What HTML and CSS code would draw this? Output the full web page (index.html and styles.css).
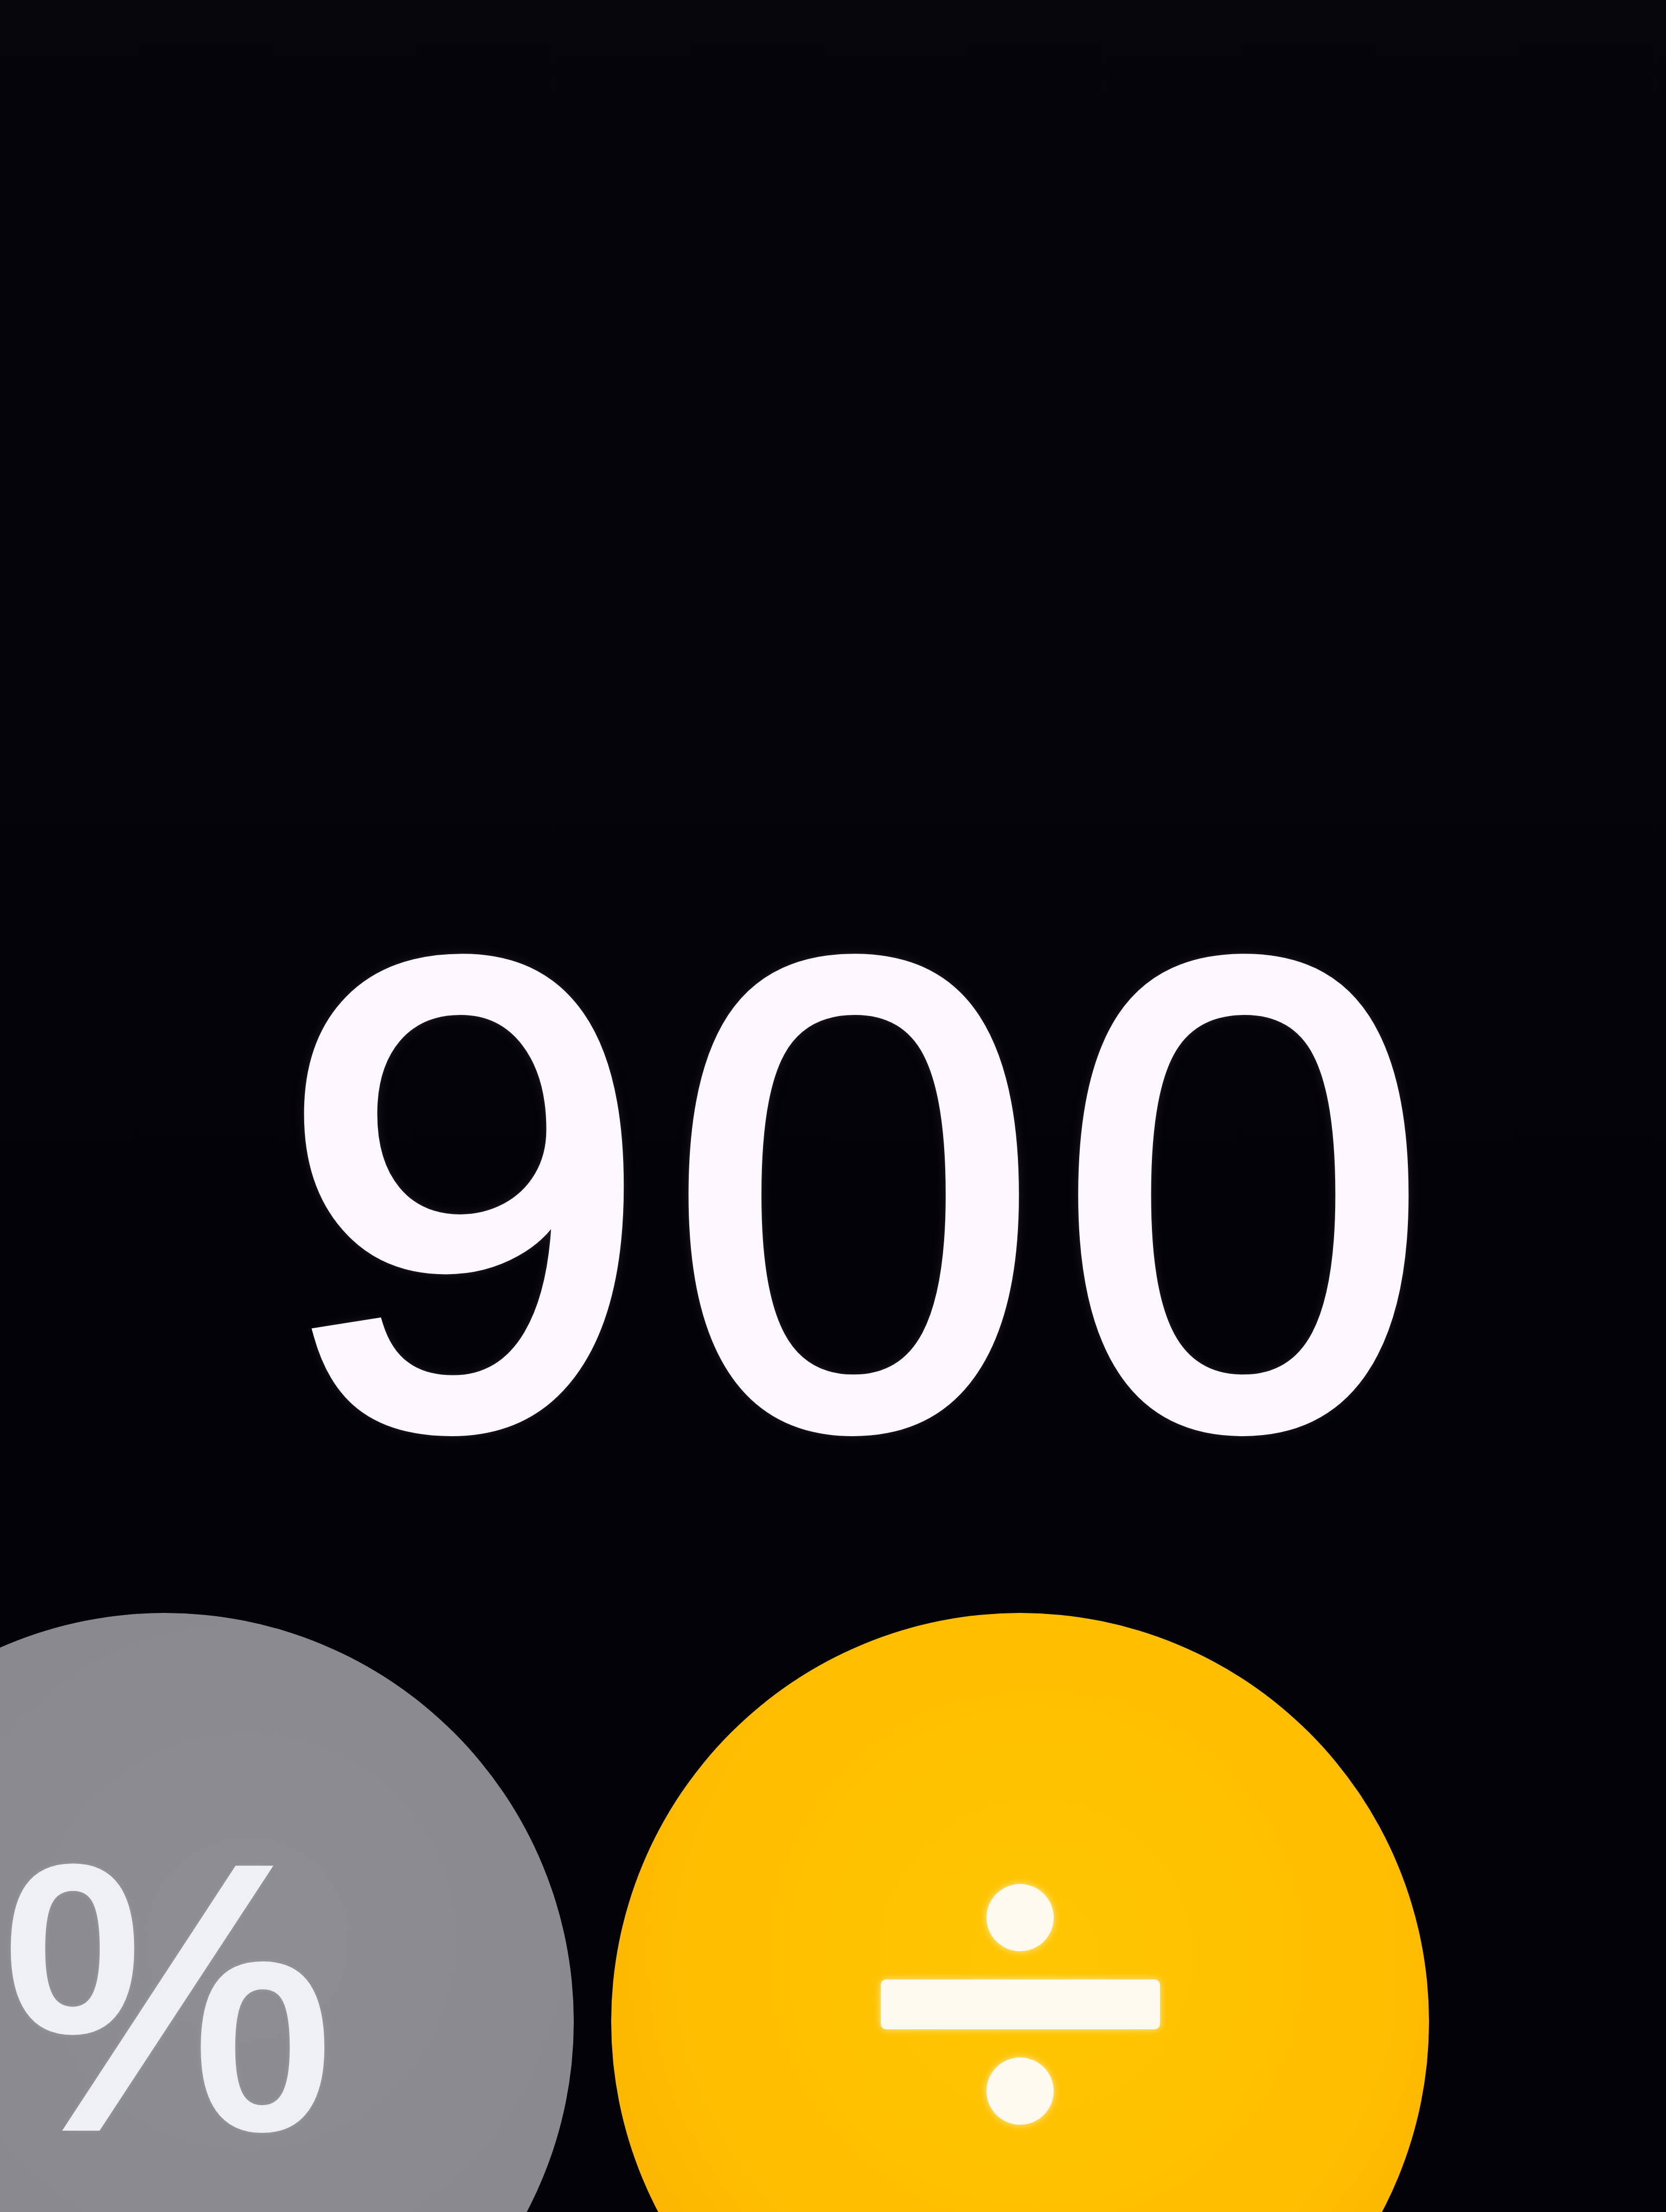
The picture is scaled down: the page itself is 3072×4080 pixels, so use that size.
FILE: index.html
```html
<!DOCTYPE html>
<html lang="en">
<head>
<meta charset="utf-8">
<title>Calculator</title>
<link rel="stylesheet" href="styles.css">
</head>
<body>
<main class="calc">
  <div class="display">900</div>
  <div class="keys">
    <button class="key key-gray"><span class="key-label">%</span></button>
    <button class="key key-orange" aria-label="divide">
      <span class="divide">
        <span class="dot"></span>
        <span class="bar"></span>
        <span class="dot"></span>
      </span>
    </button>
  </div>
</main>
</body>
</html>
```
FILE: styles.css
```css
html, body {
  margin: 0;
  padding: 0;
  background: #040307;
}
body {
  width: 3072px;
  height: 4080px;
  overflow: hidden;
}
.calc {
  width: 3072px;
  height: 4080px;
  display: flex;
  flex-direction: column;
  background: linear-gradient(180deg, #060509 0%, #050408 35%, #030206 60%, #030206 100%);
  overflow: hidden;
}
.display {
  padding-top: 1592px;
  padding-right: 400px;
  text-align: right;
  font-family: "Liberation Sans", Arial, sans-serif;
  font-size: 1220px;
  line-height: 1;
  letter-spacing: 40px;
  color: #fdf7ff;
  -webkit-text-stroke: 26px #fdf7ff;
  text-shadow: 0 0 16px rgba(240, 225, 255, 0.75), 0 0 30px rgba(220, 200, 255, 0.35);
}
.keys {
  margin-top: 163px;
  display: flex;
  justify-content: flex-end;
  gap: 69px;
  padding-right: 437px;
}
.key {
  flex-shrink: 0;
  width: 1508px;
  height: 1508px;
  border-radius: 50%;
  border: 0;
  padding: 0;
  display: flex;
  align-items: center;
  justify-content: center;
  color: #f4f4f8;
}
.key-gray {
  background: radial-gradient(circle at 60% 40%, #8e8d92 0%, #8a898e 55%, #7e7d84 100%);
  padding-bottom: 90px;
  padding-left: 10px;
}
.key-label {
  font-family: "Liberation Sans", Arial, sans-serif;
  font-size: 690px;
  line-height: 1;
  color: #eef0f4;
  -webkit-text-stroke: 14px #eef0f4;
  text-shadow: 0 0 14px rgba(255, 255, 255, 0.5);
}
.key-orange {
  background: radial-gradient(circle at 52% 42%, #ffc600 0%, #ffbe00 55%, #f7a900 100%);
  padding-bottom: 64px;
}
.divide {
  display: flex;
  flex-direction: column;
  align-items: center;
  gap: 52px;
}
.dot {
  width: 124px;
  height: 124px;
  border-radius: 50%;
  background: #fffaf0;
  box-shadow: 0 0 14px rgba(255, 250, 235, 0.7);
}
.bar {
  width: 515px;
  height: 92px;
  border-radius: 10px;
  background: #fffaf0;
  box-shadow: 0 0 14px rgba(255, 250, 235, 0.7);
}
```
